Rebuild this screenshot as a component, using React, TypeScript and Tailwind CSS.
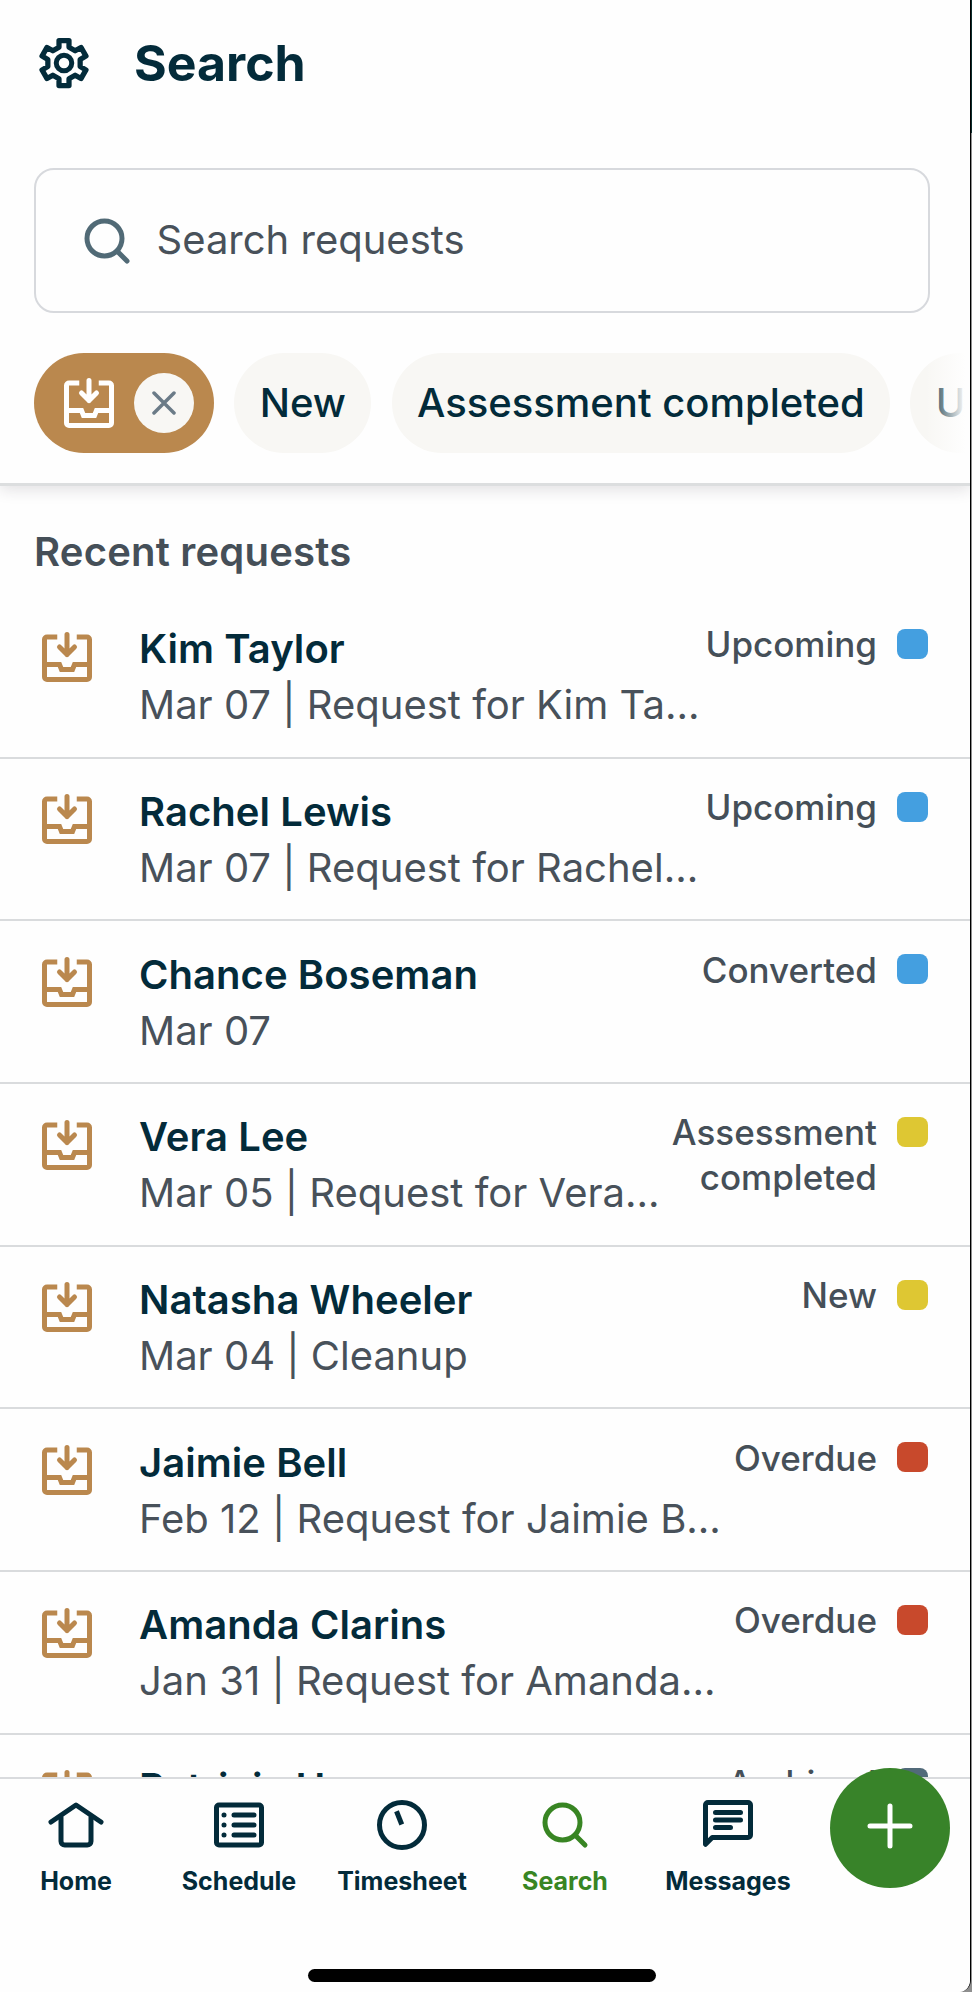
import type { ReactNode } from 'react';

interface RequestItem {
  name: string;
  detail: string;
  status: string;
  color: string;
}

interface IconProps {
  className?: string;
}

const requests: RequestItem[] = [
  { name: 'Kim Taylor', detail: 'Mar 07 | Request for Kim Ta...', status: 'Upcoming', color: 'bg-[#449fe0]' },
  { name: 'Rachel Lewis', detail: 'Mar 07 | Request for Rachel...', status: 'Upcoming', color: 'bg-[#449fe0]' },
  { name: 'Chance Boseman', detail: 'Mar 07', status: 'Converted', color: 'bg-[#449fe0]' },
  { name: 'Vera Lee', detail: 'Mar 05 | Request for Vera...', status: 'Assessment completed', color: 'bg-[#dec733]' },
  { name: 'Natasha Wheeler', detail: 'Mar 04 | Cleanup', status: 'New', color: 'bg-[#dec733]' },
  { name: 'Jaimie Bell', detail: 'Feb 12 | Request for Jaimie B...', status: 'Overdue', color: 'bg-[#c8492c]' },
  { name: 'Amanda Clarins', detail: 'Jan 31 | Request for Amanda...', status: 'Overdue', color: 'bg-[#c8492c]' },
  { name: 'Patricia Hanson', detail: 'Jan 30', status: 'Archived', color: 'bg-[#516a79]' },
];

function Icon({ className = '', children }: { className?: string; children: ReactNode }) {
  return (
    <svg
      className={`h-[60px] w-[60px] shrink-0 ${className}`}
      viewBox="0 0 24 24"
      fill="none"
      stroke="currentColor"
      strokeWidth={2}
      strokeLinecap="round"
      strokeLinejoin="round"
    >
      {children}
    </svg>
  );
}

function GearIcon({ className }: IconProps) {
  return (
    <Icon className={className}>
      <path
        strokeWidth={2.1}
        d="M10 3h4v2.7l2.46 1.42 2.33-1.35 2 3.46-2.33 1.35v2.84l2.33 1.35-2 3.46-2.33-1.35L14 18.3V21h-4v-2.7l-2.46-1.42-2.33 1.35-2-3.46 2.33-1.35v-2.84L3.21 9.23l2-3.46 2.33 1.35L10 5.7z"
      />
      <circle cx="12" cy="12" r="3.1" />
    </Icon>
  );
}

function SearchIcon({ className }: IconProps) {
  return (
    <Icon className={className}>
      <circle cx="11" cy="11" r="7" />
      <path d="M16.2 16.2 20 20" />
    </Icon>
  );
}

function RequestIcon({ className }: IconProps) {
  return (
    <Icon className={className}>
      <path strokeLinecap="butt" d="M8.1 4H4a1 1 0 0 0-1 1v15a1 1 0 0 0 1 1h16a1 1 0 0 0 1-1V5a1 1 0 0 0-1-1h-4.1" />
      <path d="M12 3v8M9 8l3 3 3-3" />
      <path strokeLinejoin="miter" d="M3 15h6l.8 2h4.4l.8-2h6" />
    </Icon>
  );
}

function HomeIcon() {
  return (
    <Icon>
      <path d="M2 10.8 12 4l10 6.8" />
      <path d="M6 9v9.5A1.5 1.5 0 0 0 7.5 20h9a1.5 1.5 0 0 0 1.5-1.5V9" />
    </Icon>
  );
}

function ScheduleIcon() {
  return (
    <Icon>
      <rect x="3" y="4" width="18" height="16" rx="1" />
      <path d="M10 8h8M10 12h8M10 16h8M6 8h.01M6 12h.01M6 16h.01" />
    </Icon>
  );
}

function TimesheetIcon() {
  return (
    <Icon>
      <circle cx="12" cy="12" r="9" />
      <path strokeLinecap="butt" d="m9.8 6.5 2.1 5.3" />
    </Icon>
  );
}

function MessagesIcon() {
  return (
    <Icon>
      <path d="M4 3h16a1 1 0 0 1 1 1v12a1 1 0 0 1-1 1H5.7L3 19.7V4a1 1 0 0 1 1-1z" />
      <path d="M7 7h10M7 10h10M7 13h6" />
    </Icon>
  );
}

function FilterChip({ label }: { label: string }) {
  return (
    <button className="h-[100px] shrink-0 whitespace-nowrap rounded-full bg-[#f8f7f4] px-[25.3px] text-[40px] font-medium leading-none text-[#032b3a]">
      {label}
    </button>
  );
}

function RequestRow({ request }: { request: RequestItem }) {
  return (
    <div className="flex h-[162.67px] shrink-0 border-b-2 border-[#d9dbdd] pl-[36.5px] pr-[42.5px] pt-[30px]">
      <RequestIcon className="mt-[0.6px] text-[#ba884e]" />
      <div className="-mt-[4.7px] ml-[42.5px] min-w-0 flex-1 whitespace-nowrap text-[40px] leading-[56px]">
        <p className="font-semibold tracking-[0.05px] text-[#032b3a]">{request.name}</p>
        <p className="text-[#48515a]">{request.detail}</p>
      </div>
      <p className="-mt-[3.7px] w-[220px] shrink-0 text-right text-[35px] font-medium leading-[45px] text-[#454f58]">
        {request.status}
      </p>
      <span className={`ml-5 mt-[3px] h-[30px] w-[30.5px] shrink-0 rounded-lg ${request.color}`} />
    </div>
  );
}

function NavItem({ label, active, children }: { label: string; active?: boolean; children: ReactNode }) {
  return (
    <button className={`flex w-[163px] flex-col items-center ${active ? 'text-[#388523]' : 'text-[#032b3a]'}`}>
      {children}
      <span className="mt-[9px] text-[25px] font-bold leading-[34px]">{label}</span>
    </button>
  );
}

export default function App() {
  return (
    <div className="flex h-[1992px] w-[972px] overflow-hidden bg-[#8f8f8f] bg-linear-to-b from-[#0b2b2b] from-[133px] to-[#8f8f8f] to-[133px] font-['Inter',sans-serif]">
      <div className="relative flex w-[971px] flex-col overflow-hidden rounded-br-[12px] border-r border-black bg-[#fefefe]">
        <header className="relative z-10 h-[486px] shrink-0 border-b-[3px] border-[#dcdedf] bg-[#fefefe] shadow-[0_4px_14px_rgba(40,30,50,0.13)]">
          <div className="flex h-[168px] items-start pl-[34px] pt-[33px]">
            <GearIcon className="text-[#032b3a]" />
            <h1 className="ml-10 text-[50px] font-bold leading-[60px] text-[#032b3a]">Search</h1>
          </div>

          <div className="ml-[34px] flex h-[145px] w-[896px] items-center rounded-[20px] border-2 border-[#d7d9dd] pl-[40.5px] text-[#48515a]">
            <SearchIcon className="text-[#516a76]" />
            <span className="-mt-px ml-5 text-[40px]">Search requests</span>
          </div>

          <div className="relative mt-10 flex gap-[20.4px] overflow-hidden pl-[34px]">
            <div className="flex h-[100px] w-[180px] shrink-0 items-center gap-[15px] rounded-full bg-[#ba884e] pl-[25px]">
              <RequestIcon className="text-white" />
              <button className="flex h-[60px] w-[60px] items-center justify-center rounded-full bg-[#f8f7f4]">
                <svg className="h-6 w-6" viewBox="0 0 24 24" fill="none" stroke="#6b7b87" strokeWidth={3.5} strokeLinecap="round">
                  <path d="m2 2 20 20M22 2 2 22" />
                </svg>
              </button>
            </div>
            <FilterChip label="New" />
            <FilterChip label="Assessment completed" />
            <FilterChip label="Unscheduled" />
            <div className="absolute right-0 top-0 h-full w-[45px] bg-linear-to-r from-[#fefefe]/0 to-[#fefefe] to-90%" />
          </div>
        </header>

        <main className="flex h-[1291px] shrink-0 flex-col overflow-hidden">
          <h2 className="h-[110px] shrink-0 pl-[34px] pt-[38px] text-[40px] font-semibold leading-[56px] tracking-[0.2px] text-[#454f58]">
            Recent requests
          </h2>
          {requests.map((request) => (
            <RequestRow key={request.name} request={request} />
          ))}
        </main>

        <nav className="relative flex flex-1 items-start border-t-2 border-[#d9dbde] bg-[#fefefe] pt-4">
          <div className="-ml-[5.5px] flex">
            <NavItem label="Home"><HomeIcon /></NavItem>
            <NavItem label="Schedule"><ScheduleIcon /></NavItem>
            <NavItem label="Timesheet"><TimesheetIcon /></NavItem>
            <NavItem label="Search" active><SearchIcon /></NavItem>
            <NavItem label="Messages"><MessagesIcon /></NavItem>
          </div>
          <button className="absolute -top-[11px] right-5 flex h-[120px] w-[120px] items-center justify-center rounded-full bg-[#388329] text-white">
            <svg className="-mt-[5px] h-[46px] w-[46px]" viewBox="0 0 46 46" fill="none" stroke="currentColor" strokeWidth={5} strokeLinecap="round">
              <path d="M23 3v40M3 23h40" />
            </svg>
          </button>
          <div className="absolute bottom-[10px] left-[308px] h-[13px] w-[348px] rounded-full bg-black" />
        </nav>
      </div>
    </div>
  );
}
